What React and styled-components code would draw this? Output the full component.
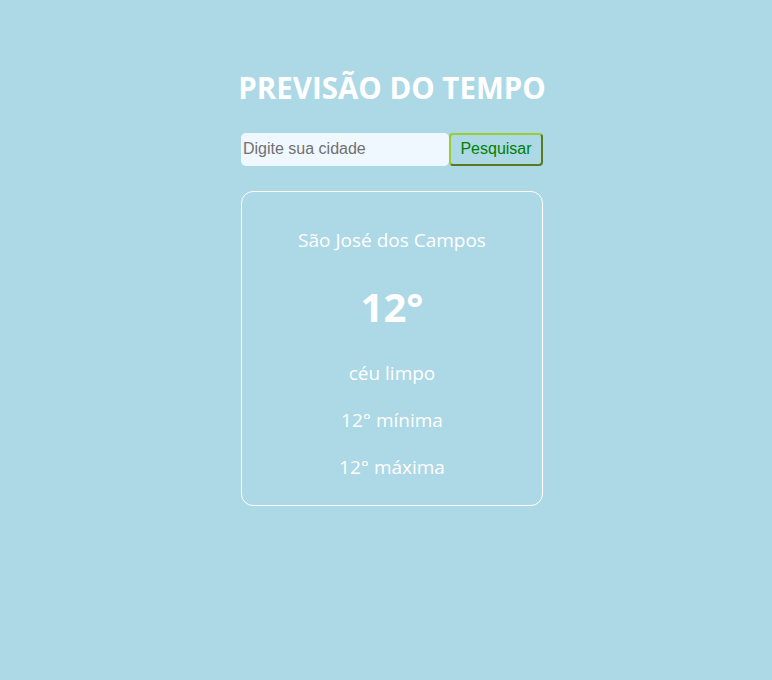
import React from "react";
import styled, { createGlobalStyle } from "styled-components";

const Global = createGlobalStyle`
  body {
    margin: 0;
    background: #add8e6;
    font-family: "Open Sans", "Noto Sans", sans-serif;
  }
`;

const Page = styled.div`
  min-height: 680px;
  display: flex;
  flex-direction: column;
  align-items: center;
  padding: 70px 0 0 12px;
  box-sizing: border-box;
`;

const Title = styled.h1`
  margin: 0;
  color: #fff;
  font-size: 29.5px;
  font-weight: 700;
  line-height: 36px;
`;

const SearchRow = styled.div`
  display: flex;
  margin-top: 27px;
`;

const Input = styled.input`
  width: 208px;
  height: 33px;
  box-sizing: border-box;
  border: none;
  border-radius: 5px;
  background: #f0f8ff;
  padding: 0 2px 2px;
  font-family: "Liberation Sans", Arial, sans-serif;
  font-size: 16px;
  outline: none;
  &::placeholder {
    color: #707070;
  }
`;

const Button = styled.button`
  width: 94px;
  height: 33px;
  box-sizing: border-box;
  background: #add8e6;
  border: 2px outset #9acd32;
  border-radius: 4px;
  color: #008000;
  font-family: "Liberation Sans", Arial, sans-serif;
  font-size: 16px;
  padding: 0 0 2px;
`;

const Card = styled.div`
  margin-top: 25px;
  width: 302px;
  height: 315px;
  box-sizing: border-box;
  border: 1px solid #fff;
  border-radius: 12px;
  display: flex;
  flex-direction: column;
  align-items: center;
  padding-top: 35px;
  color: #fff;
`;

const Line = styled.p`
  margin: ${(p) => p.$top || 0}px 0 0;
  font-size: ${(p) => (p.$big ? 40 : 19)}px;
  font-weight: ${(p) => (p.$big ? 700 : 400)};
  line-height: ${(p) => (p.$big ? 54 : 26)}px;
`;

export default function App() {
  return (
    <>
      <Global />
      <Page>
        <Title>PREVISÃO DO TEMPO</Title>
        <SearchRow>
          <Input placeholder="Digite sua cidade" type="text" />
          <Button>Pesquisar</Button>
        </SearchRow>
        <Card>
          <Line>São José dos Campos</Line>
          <Line $big $top={27}>12°</Line>
          <Line $top={26}>céu limpo</Line>
          <Line $top={21}>12° mínima</Line>
          <Line $top={21}>12° máxima</Line>
        </Card>
      </Page>
    </>
  );
}
